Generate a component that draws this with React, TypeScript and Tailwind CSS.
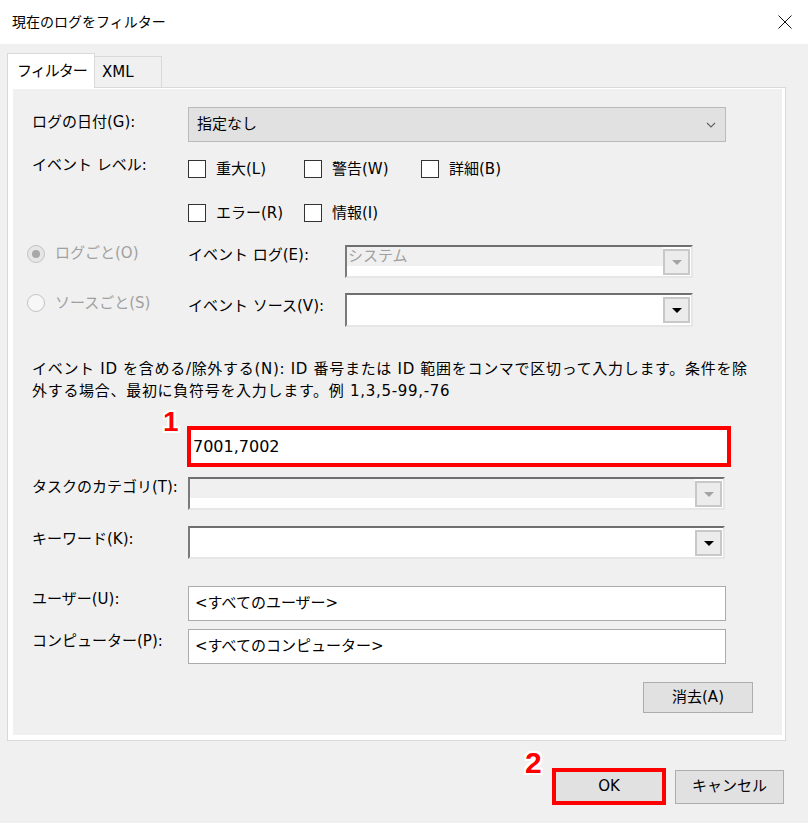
import React from 'react';

const Checkbox: React.FC<{ label: string; className: string }> = ({ label, className }) => (
  <div className={`flex items-center gap-[10px] ${className}`}>
    <span className="w-[18px] h-[18px] border border-[#333333] bg-white shrink-0" />
    <span className="leading-[20px]">{label}</span>
  </div>
);

const Arrow: React.FC<{ disabled?: boolean }> = ({ disabled }) => (
  <div className="w-[27px] h-[26px] mt-[2px] mr-[1px] border-2 border-[#c8c8c8] bg-[#ececec] flex items-center justify-center shrink-0">
    <svg width="12" height="8" viewBox="0 0 12 8">
      <polygon points="1,2 11,2 6,7" fill={disabled ? '#a3a3a3' : '#000000'} />
    </svg>
  </div>
);

// old style sunken combo box
const LegacyCombo: React.FC<{ className: string; disabled?: boolean; text?: string }> = ({ className, disabled, text }) => (
  <div className={`h-full flex border-2 border-t-[#6f6f6f] border-l-[#7a7a7a] border-r-[#e6e6e6] border-b-[#e6e6e6] bg-white ${className}`}>
    <div className="flex-1">
      {disabled && (
        <div className="h-[19px] bg-[#f0f0f0] pl-[1px] leading-[19px] text-[#a0a0a0]">{text}</div>
      )}
    </div>
    <Arrow disabled={disabled} />
  </div>
);

const Radio: React.FC<{ checked?: boolean }> = ({ checked }) => (
  <span
    className={`w-[18px] h-[18px] rounded-full border border-[#c4c4c4] flex items-center justify-center shrink-0 ${
      checked ? 'bg-[#e6e6e6]' : 'bg-[#f7f7f7]'
    }`}
  >
    {checked && <span className="w-[8px] h-[8px] rounded-full bg-[#a8a8a8]" />}
  </span>
);

const outline =
  '[text-shadow:-2px_0_#fff,2px_0_#fff,0_-2px_#fff,0_2px_#fff,-2px_-2px_#fff,2px_2px_#fff,-2px_2px_#fff,2px_-2px_#fff]';

export default function App() {
  return (
    <div className="w-[808px] h-[823px] overflow-hidden bg-[#f0f0f0] text-[15px] text-black font-['DejaVu_Sans','Noto_Sans_CJK_JP',sans-serif] flex flex-col">
      {/* Title bar */}
      <div className="h-[44px] shrink-0 bg-white flex items-center justify-between pl-[12px] pr-[16px]">
        <span className="text-[14px]">現在のログをフィルター</span>
        <svg width="14" height="14" viewBox="0 0 14 14">
          <path d="M0.5 0.5 L13.5 13.5 M13.5 0.5 L0.5 13.5" stroke="#111" strokeWidth="1" />
        </svg>
      </div>

      {/* Tabs */}
      <div className="mt-[9px] ml-[7px] h-[34px] flex items-start">
        <div className="relative z-10 h-[35px] w-[88px] bg-white border border-b-0 border-[#d9d9d9] flex items-center pl-[9px] tracking-[-1px]">
          フィルター
        </div>
        <div className="mt-[3px] h-[31px] w-[67px] bg-[#f0f0f0] border border-l-0 border-b-0 border-[#d9d9d9] flex items-center pl-[7px]">
          XML
        </div>
      </div>

      {/* Tab page */}
      <div className="ml-[7px] w-[779px] h-[654px] shrink-0 border border-[#d9d9d9] bg-white pt-[1px] pl-[5px] pr-[3px] pb-[5px]">
        <div className="h-full bg-[#f0f0f0] flex flex-col">
          <div className="mt-[18px] h-[35px] flex items-center pl-[19px]">
            <div className="w-[156px] pb-[5px]">ログの日付(G):</div>
            <div className="w-[538px] h-full bg-[#e1e1e1] border border-[#bababa] flex items-center justify-between pl-[8px] pr-[9px]">
              <span>指定なし</span>
              <svg width="10" height="6" viewBox="0 0 10 6">
                <polyline points="1,1 5,5 9,1" fill="none" stroke="#606060" strokeWidth="1.1" />
              </svg>
            </div>
          </div>

          <div className="mt-[17px] h-[19px] flex items-center pl-[19px]">
            <div className="w-[156px] pb-[7px] leading-[20px]">イベント レベル:</div>
            <Checkbox className="w-[116px]" label="重大(L)" />
            <Checkbox className="w-[117px]" label="警告(W)" />
            <Checkbox className="w-[120px]" label="詳細(B)" />
          </div>
          <div className="mt-[25px] h-[19px] flex items-center pl-[175px]">
            <Checkbox className="w-[116px]" label="エラー(R)" />
            <Checkbox className="w-[117px]" label="情報(I)" />
          </div>

          <div className="mt-[23px] h-[33px] flex items-center pl-[14px]">
            <div className="w-[161px] flex items-center gap-[10px] pb-[16px] text-[#a0a0a0]">
              <Radio checked />
              <span>ログごと(O)</span>
            </div>
            <div className="w-[157px] pb-[13px]">イベント ログ(E):</div>
            <LegacyCombo className="w-[348px]" disabled text="システム" />
          </div>
          <div className="mt-[15px] h-[34px] flex items-center pl-[14px]">
            <div className="w-[161px] flex items-center gap-[10px] pb-[14px] text-[#a0a0a0]">
              <Radio />
              <span>ソースごと(S)</span>
            </div>
            <div className="w-[157px] pb-[8px]">イベント ソース(V):</div>
            <LegacyCombo className="w-[348px]" />
          </div>

          <div className="mt-[31px] pl-[19px] leading-[22px] whitespace-nowrap tracking-[0.7px]">
            <div>イベント ID を含める/除外する(N): ID 番号または ID 範囲をコンマで区切って入力します。条件を除</div>
            <div>外する場合、最初に負符号を入力します。例 1,3,5-99,-76</div>
          </div>

          <div className="mt-[24px] pl-[174px]">
            <div className="relative w-[544px] h-[41px] border-4 border-[#ff0000] bg-white flex items-center pl-[2px]">
              <span className="text-[16px]">7001,7002</span>
              <span
                className={`absolute left-[-28px] top-[-22px] text-[28px] leading-none font-bold text-[#ff0000] font-['Liberation_Sans',sans-serif] ${outline}`}
              >
                1
              </span>
            </div>
          </div>

          <div className="mt-[10px] h-[33px] flex items-center pl-[19px]">
            <div className="w-[156px] pb-[12px]">タスクのカテゴリ(T):</div>
            <LegacyCombo className="w-[537px]" disabled text="" />
          </div>
          <div className="mt-[16px] h-[33px] flex items-center pl-[19px]">
            <div className="w-[156px] pb-[7px]">キーワード(K):</div>
            <LegacyCombo className="w-[537px]" />
          </div>

          <div className="mt-[27px] h-[35px] flex items-center pl-[19px]">
            <div className="w-[156px] pb-[8px]">ユーザー(U):</div>
            <div className="w-[538px] h-full bg-white border border-[#ababab] flex items-center pl-[6px]">
              &lt;すべてのユーザー&gt;
            </div>
          </div>
          <div className="mt-[8px] h-[35px] flex items-center pl-[19px]">
            <div className="w-[156px] pb-[10px]">コンピューター(P):</div>
            <div className="w-[538px] h-full bg-white border border-[#ababab] flex items-center pl-[6px]">
              &lt;すべてのコンピューター&gt;
            </div>
          </div>

          <div className="mt-[18px] h-[31px] flex justify-end pr-[29px]">
            <div className="w-[110px] h-full bg-[#e1e1e1] border border-[#adadad] flex items-center justify-center">
              消去(A)
            </div>
          </div>
        </div>
      </div>

      {/* Dialog buttons */}
      <div className="mt-[27px] flex justify-end items-center gap-[9px] pr-[24px]">
        <div className="relative w-[114px] h-[37px] border-4 border-[#ff0000] bg-[#e1e1e1] flex items-center justify-center">
          OK
          <span
            className={`absolute left-[-31px] top-[-24px] text-[30px] leading-none font-bold text-[#ff0000] font-['Liberation_Sans',sans-serif] ${outline}`}
          >
            2
          </span>
        </div>
        <div className="w-[109px] h-[34px] bg-[#e1e1e1] border border-[#adadad] flex items-center justify-center">
          キャンセル
        </div>
      </div>
    </div>
  );
}
